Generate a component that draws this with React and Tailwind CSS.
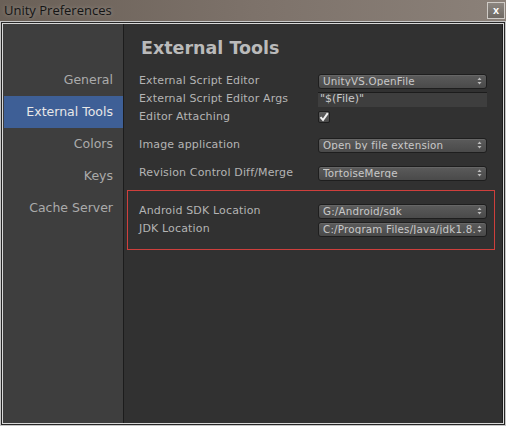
import React from 'react';

const FONT = { fontFamily: '"DejaVu Sans", "Liberation Sans", sans-serif' };

const navItems = ['General', 'External Tools', 'Colors', 'Keys', 'Cache Server'];

// Unity-style popup field with up/down arrows
const Popup = ({ value }) => (
  <div className="relative w-[169px] h-[15px] rounded-[3px] border border-[#1e1e1e] bg-gradient-to-b from-[#5b5b5b] to-[#4a4a4a] shadow-[inset_0_1px_0_rgba(255,255,255,0.08)] flex items-center pl-[4px] pr-[10px]">
    <span className="min-w-0 overflow-hidden text-[10.3px] leading-none text-[#c9c9c9] whitespace-nowrap tracking-[0.2px]">{value}</span>
    <svg className="absolute right-[4px] top-1/2 -translate-y-1/2" width="5" height="8" viewBox="0 0 5 8">
      <path d="M2.5 0.5 L4.5 3 L0.5 3 Z" fill="#bdbdbd" />
      <path d="M2.5 7.5 L4.5 5 L0.5 5 Z" fill="#bdbdbd" />
    </svg>
  </div>
);

const Row = ({ label, children }) => (
  <div className="flex items-center h-[18px]">
    <div className="w-[179px] text-[11px] text-[#b4b4b4] tracking-[0.15px] whitespace-nowrap">{label}</div>
    {children}
  </div>
);

export default function App() {
  return (
    <div className="w-[506px] h-[426px] flex flex-col bg-[#d0d0d0]" style={FONT}>
      {/* Title bar */}
      <div className="h-[21px] flex items-center justify-between bg-gradient-to-r from-[#6a6057] via-[#7d726a] to-[#8b8179]">
        <span
          className="pl-[4px] text-[13px] text-[#141414] [text-shadow:0_0_4px_rgba(255,255,255,0.35)]"
          style={{ fontFamily: '"Open Sans", "Liberation Sans", sans-serif' }}
        >
          Unity Preferences
        </span>
        <div className="mr-[1px] w-[18px] h-[17px] border border-[#cfcbc6] bg-gradient-to-b from-[#8c8680] to-[#6f6963] flex items-center justify-center">
          <span className="text-[11px] leading-none font-bold text-white" style={{ fontFamily: '"Liberation Sans", sans-serif' }}>x</span>
        </div>
      </div>

      {/* Window frame */}
      <div className="flex-1 flex border border-[#c6c6c6]">
        <div className="flex-1 flex border border-[#262626]">
          <div className="flex-1 flex border border-[#d8d8d8]">
            {/* Sidebar */}
            <div className="w-[121px] bg-[#3e3e3e] border-r border-[#1c1c1c] pt-[40px] pl-px">
              {navItems.map((item) => (
                <div
                  key={item}
                  className={
                    item === 'External Tools'
                      ? 'h-[32px] flex items-center justify-end pr-[10px] text-[12.5px] bg-[#3e5f96] text-[#e8e8e8]'
                      : 'h-[32px] flex items-center justify-end pr-[10px] text-[12.5px] text-[#ababab]'
                  }
                >
                  {item}
                </div>
              ))}
            </div>

            {/* Main panel */}
            <div className="flex-1 bg-[#313131] pt-[12px] pl-[3px] border-r border-[#1c1c1c]">
              <div className="h-[24px] flex items-center pl-[14px] text-[17.5px] font-bold text-[#bababa]">
                External Tools
              </div>

              <div className="mt-[12px] pl-[12px]">
                <Row label="External Script Editor">
                  <Popup value="UnityVS.OpenFile" />
                </Row>
                <Row label="External Script Editor Args">
                  <div className="w-[169px] h-[15px] bg-[#3e3e3e] border-t border-[#1c1c1c] flex items-center pl-[2px] text-[11px] text-[#c9c9c9]">
                    "$(File)"
                  </div>
                </Row>
                <Row label="Editor Attaching">
                  <div className="w-[12px] h-[12px] rounded-[2px] border border-[#1e1e1e] bg-gradient-to-b from-[#5e5e5e] to-[#4a4a4a] flex items-center justify-center">
                    <svg width="10" height="10" viewBox="0 0 10 10">
                      <path d="M1.5 5.2 L4 8 L8.8 1.2" fill="none" stroke="#f2f2f2" strokeWidth="2" />
                    </svg>
                  </div>
                </Row>

                <div className="mt-[10px]">
                  <Row label="Image application">
                    <Popup value="Open by file extension" />
                  </Row>
                </div>
                <div className="mt-[10px]">
                  <Row label="Revision Control Diff/Merge">
                    <Popup value="TortoiseMerge" />
                  </Row>
                </div>
              </div>

              {/* Highlighted SDK box */}
              <div className="mt-[8px] w-[368px] border border-[#cf3f3c] pt-[11px] pb-[11px] pl-[11px]">
                <Row label="Android SDK Location">
                  <Popup value="G:/Android/sdk" />
                </Row>
                <Row label="JDK Location">
                  <Popup value="C:/Program Files/Java/jdk1.8.0_" />
                </Row>
              </div>
            </div>
          </div>
        </div>
      </div>
    </div>
  );
}
